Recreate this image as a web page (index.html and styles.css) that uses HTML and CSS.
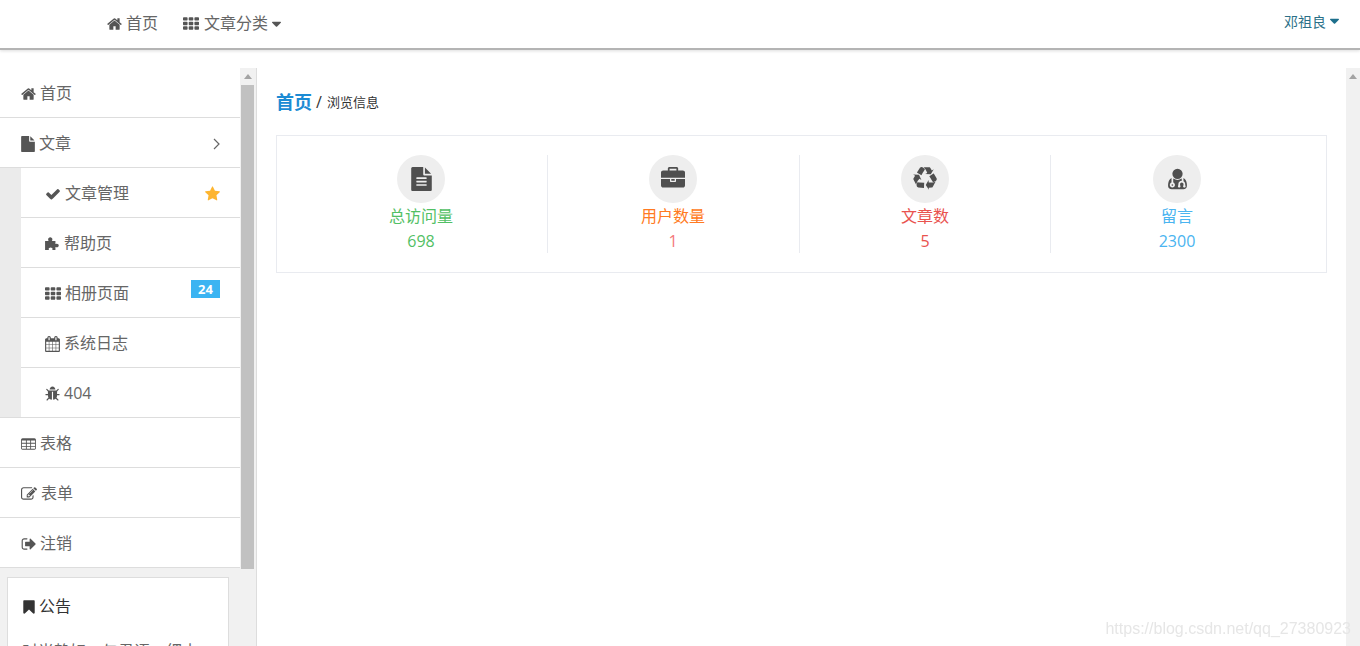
FILE: index.html
```html
<!DOCTYPE html>
<html lang="zh-CN">
<head>
<meta charset="utf-8">
<title>后台首页</title>
<link rel="stylesheet" href="styles.css">
</head>
<body>
<svg class="defs" xmlns="http://www.w3.org/2000/svg">
  <symbol id="i-home" viewBox="64 0 1664 1792"><path d="M1472 992v480q0 26-19 45t-45 19h-384v-384h-256v384h-384q-26 0-45-19t-19-45v-480q0-1 .5-3t.5-3l575-474 575 474q1 2 1 6zm223-69l-62 74q-8 9-21 11h-3q-13 0-21-7l-692-577-692 577q-12 8-24 7-13-2-21-11l-62-74q-8-10-7-23.5t11-21.5l719-599q32-26 76-26t76 26l244 204v-195q0-14 9-23t23-9h192q14 0 23 9t9 23v408l219 182q10 8 11 21.5t-7 23.5z"/></symbol>
  <symbol id="i-th" viewBox="0 0 1792 1792"><path d="M512 1248v192q0 40-28 68t-68 28h-320q-40 0-68-28t-28-68v-192q0-40 28-68t68-28h320q40 0 68 28t28 68zm0-512v192q0 40-28 68t-68 28h-320q-40 0-68-28t-28-68v-192q0-40 28-68t68-28h320q40 0 68 28t28 68zm640 512v192q0 40-28 68t-68 28h-320q-40 0-68-28t-28-68v-192q0-40 28-68t68-28h320q40 0 68 28t28 68zm-640-1024v192q0 40-28 68t-68 28h-320q-40 0-68-28t-28-68v-192q0-40 28-68t68-28h320q40 0 68 28t28 68zm640 512v192q0 40-28 68t-68 28h-320q-40 0-68-28t-28-68v-192q0-40 28-68t68-28h320q40 0 68 28t28 68zm640 512v192q0 40-28 68t-68 28h-320q-40 0-68-28t-28-68v-192q0-40 28-68t68-28h320q40 0 68 28t28 68zm-640-1024v192q0 40-28 68t-68 28h-320q-40 0-68-28t-28-68v-192q0-40 28-68t68-28h320q40 0 68 28t28 68zm640 512v192q0 40-28 68t-68 28h-320q-40 0-68-28t-28-68v-192q0-40 28-68t68-28h320q40 0 68 28t28 68zm0-512v192q0 40-28 68t-68 28h-320q-40 0-68-28t-28-68v-192q0-40 28-68t68-28h320q40 0 68 28t28 68z"/></symbol>
  <symbol id="i-caret" viewBox="0 0 1024 1792"><path d="M1024 704q0 26-19 45l-448 448q-19 19-45 19t-45-19l-448-448q-19-19-19-45t19-45 45-19h896q26 0 45 19t19 45z"/></symbol>
  <symbol id="i-file" viewBox="0 0 1536 1792"><path d="M1024 512v-472q22 14 36 28l408 408q14 14 28 36h-472zm-128 32q0 40 28 68t68 28h544v1056q0 40-28 68t-68 28h-1344q-40 0-68-28t-28-68v-1600q0-40 28-68t68-28h800v544z"/></symbol>
  <symbol id="i-check" viewBox="0 0 1792 1792"><path d="M1671 566q0 40-28 68l-724 724-136 136q-28 28-68 28t-68-28l-136-136-362-362q-28-28-28-68t28-68l136-136q28-28 68-28t68 28l294 295 656-657q28-28 68-28t68 28l136 136q28 28 28 68z"/></symbol>
  <symbol id="i-star" viewBox="0 0 1664 1792"><path d="M1664 647q0 22-26 48l-363 354 86 500q1 7 1 20 0 21-10.5 35.5t-30.5 14.5q-19 0-40-12l-449-236-449 236q-22 12-40 12-21 0-31.5-14.5t-10.5-35.5q0-6 2-20l86-500-364-354q-25-27-25-48 0-37 56-46l502-73 225-455q19-41 49-41t49 41l225 455 502 73q56 9 56 46z"/></symbol>
  <symbol id="i-puzzle" viewBox="0 0 1664 1792"><path d="M0 560h400q-60-80-60-190 0-100 70-160t170-60 170 60 70 160q0 110-60 190h400v340q70-40 150-40 100 0 160 60t60 140-60 140-160 60q-80 0-150-40v340H800q40-60 40-120 0-70-60-110t-160-40-160 40-60 110q0 60 40 120H0z"/></symbol>
  <symbol id="i-cal" viewBox="0 0 1664 1792"><path d="M128 1664h288v-288h-288v288zm352 0h320v-288h-320v288zm-352-352h288v-320h-288v320zm352 0h320v-320h-320v320zm-352-384h288v-288h-288v288zm736 736h320v-288h-320v288zm-384-736h320v-288h-320v288zm768 736h288v-288h-288v288zm-384-352h320v-320h-320v320zm-352-864v-288q0-13-9.5-22.5t-22.5-9.5h-64q-13 0-22.5 9.5t-9.5 22.5v288q0 13 9.5 22.5t22.5 9.5h64q13 0 22.5-9.5t9.5-22.5zm736 864h288v-320h-288v320zm-384-384h320v-288h-320v288zm384 0h288v-288h-288v288zm32-480v-288q0-13-9.5-22.5t-22.5-9.5h-64q-13 0-22.5 9.5t-9.5 22.5v288q0 13 9.5 22.5t22.5 9.5h64q13 0 22.5-9.5t9.5-22.5zm384-64v1280q0 52-38 90t-90 38h-1408q-52 0-90-38t-38-90v-1280q0-52 38-90t90-38h128v-96q0-66 47-113t113-47h64q66 0 113 47t47 113v96h384v-96q0-66 47-113t113-47h64q66 0 113 47t47 113v96h128q52 0 90 38t38 90z"/></symbol>
  <symbol id="i-bug" viewBox="0 0 1664 1792"><path d="M1632 960q0 26-19 45t-45 19h-224q0 171-67 290l208 209q19 19 19 45t-19 45q-18 19-45 19t-45-19l-198-197q-5 5-15 13t-42 28.5-65 36.5-82 29-97 13v-896h-128v896q-51 0-101.5-13.5t-87-33-66-39-43.5-32.5l-15-14-183 207q-20 21-48 21-24 0-43-16-19-18-20.5-44.5t15.5-46.5l202-227q-58-114-58-274h-224q-26 0-45-19t-19-45 19-45 45-19h224v-294l-173-173q-19-19-19-45t19-45 45-19 45 19l173 173h844l173-173q19-19 45-19t45 19 19 45-19 45l-173 173v294h224q26 0 45 19t19 45zm-480-576h-640q0-133 93.5-226.5t226.5-93.5 226.5 93.5 93.5 226.5z"/></symbol>
  <symbol id="i-table" viewBox="0 0 1664 1792"><path fill-rule="evenodd" d="M160 256h1344q66 0 113 47t47 113v960q0 66-47 113t-113 47H160q-66 0-113-47T0 1376V416q0-66 47-113t113-47zM96 512v256h448V512zm0 352v256h448V864zm0 352v160q0 64 64 64h384v-224zM640 512v256h384V512zm0 352v256h384V864zm0 352v224h384v-224zM1120 512v256h448V512zm0 352v256h448V864zm0 352v224h384q64 0 64-64v-160z"/></symbol>
  <symbol id="i-edit" viewBox="0 0 1792 1792"><path d="M888 1184l116-116-152-152-116 116v56h96v96h56zm440-720q-16-16-33 1l-350 350q-17 17-1 33t33-1l350-350q17-17 1-33zm80 594v190q0 119-84.5 203.5t-203.5 84.5h-832q-119 0-203.5-84.5t-84.5-203.5v-832q0-119 84.5-203.5t203.5-84.5h832q63 0 117 25 15 7 18 23 3 17-9 29l-49 49q-14 14-32 8-23-6-45-6h-832q-66 0-113 47t-47 113v832q0 66 47 113t113 47h832q66 0 113-47t47-113v-126q0-13 9-22l64-64q15-15 35-7t20 29zm-96-738l288 288-672 672h-288v-288zm444 132l-92 92-288-288 92-92q28-28 68-28t68 28l152 152q28 28 28 68t-28 68z"/></symbol>
  <symbol id="i-out" viewBox="0 0 1664 1792"><path d="M704 1440q0 4 1 20t.5 26.5-3 23.5-10 19.5-20.5 6.5h-320q-119 0-203.5-84.5t-84.5-203.5v-704q0-119 84.5-203.5t203.5-84.5h320q13 0 22.5 9.5t9.5 22.5q0 4 1 20t.5 26.5-3 23.5-10 19.5-20.5 6.5h-320q-66 0-113 47t-47 113v704q0 66 47 113t113 47h312l11.5 1 11.5 3 8 5.5 7 9 2 13.5zm928-544q0 26-19 45l-544 544q-19 19-45 19t-45-19-19-45v-288h-448q-26 0-45-19t-19-45v-384q0-26 19-45t45-19h448v-288q0-26 19-45t45-19 45 19l544 544q19 19 19 45z"/></symbol>
  <symbol id="i-bookmark" viewBox="0 0 1280 1792"><path d="M1164 128q23 0 44 9 33 13 52.5 41t19.5 62v1289q0 34-19.5 62t-52.5 41q-19 8-44 8-48 0-83-32l-441-424-441 424q-36 33-83 33-23 0-44-9-33-13-52.5-41t-19.5-62v-1289q0-34 19.5-62t52.5-41q21-9 44-9h1048z"/></symbol>
  <symbol id="i-filetext" viewBox="0 0 1536 1792"><path d="M1468 476q14 14 28 36h-472v-472q22 14 36 28zm-476 164h544v1056q0 40-28 68t-68 28h-1344q-40 0-68-28t-28-68v-1600q0-40 28-68t68-28h800v544q0 40 28 68t68 28zm160 736v-64q0-14-9-23t-23-9h-704q-14 0-23 9t-9 23v64q0 14 9 23t23 9h704q14 0 23-9t9-23zm0-256v-64q0-14-9-23t-23-9h-704q-14 0-23 9t-9 23v64q0 14 9 23t23 9h704q14 0 23-9t9-23zm0-256v-64q0-14-9-23t-23-9h-704q-14 0-23 9t-9 23v64q0 14 9 23t23 9h704q14 0 23-9t9-23z"/></symbol>
  <symbol id="i-brief" viewBox="0 0 1792 1792"><path d="M640 256h512v-128h-512v128zm1152 640v480q0 66-47 113t-113 47h-1472q-66 0-113-47t-47-113v-480h672v160q0 26 19 45t45 19h320q26 0 45-19t19-45v-160h672zm-768 0v128h-256v-128h256zm768-480v384h-1792v-384q0-66 47-113t113-47h352v-160q0-40 28-68t68-28h576q40 0 68 28t28 68v160h352q66 0 113 47t47 113z"/></symbol>
  <symbol id="i-recycle" viewBox="0 0 1792 1792"><path d="M836 1169l-15 368-2 22-420-29q-36-3-67-31.5t-47-65.5q-11-27-14.5-55t4-65 12-55 21.5-64 19-53q78 12 509 28zm-387-586l180 379-147-92q-63 72-111.5 144.5t-72.5 125-39.5 94.5-18.5 63l-4 21-190-357q-17-26-18-56t6-47l8-18q35-63 114-188l-140-86zm1231 517l-188 359q-12 29-36.5 46.5t-43.5 20.5l-18 4q-71 7-219 12l8 164-230-367 211-362 7 173q170 16 283 5t170-33zm-785-924q-47 63-265 435l-317-187-19-12 225-356q20-31 60-45t80-10q24 2 48.5 12t42 21 41.5 33 36 34.5 36 39.5 32 35zm655 307l212 363q18 37 12.5 76t-27.5 74q-13 20-33 37t-38 28-48.5 22-47 16-51.5 14-46 12q-34-72-265-436l313-195zm-143-226l142-83-220 373-419-20 151-86q-34-89-75-166t-75.5-123.5-64.5-80-47-46.5l-17-13 405 1q31-3 58 10.5t39 28.5l11 15q39 61 112 190z"/></symbol>
  <symbol id="i-usermd" viewBox="0 0 1408 1792"><path d="M384 1344q0 26-19 45t-45 19-45-19-19-45 19-45 45-19 45 19 19 45zm1024 61q0 121-73 190t-194 69h-874q-121 0-194-69t-73-190q0-68 5.5-131t24-138 47.5-132.5 81-103 120-60.5q-22 52-22 120v203q-58 20-93 70t-35 111q0 80 56 136t136 56 136-56 56-136q0-61-35.5-111t-92.5-70v-203q0-62 25-93 132 104 295 104t295-104q25 31 25 93v64q-106 0-181 75t-75 181v89q-32 29-32 71 0 40 28 68t68 28 68-28 28-68q0-42-32-71v-89q0-52 38-90t90-38 90 38 38 90v89q-32 29-32 71 0 40 28 68t68 28 68-28 28-68q0-42-32-71v-89q0-68-34.5-127.5t-93.5-93.5q0-10 .5-42.5t0-48-2.5-41.5-7-47-13-40q68 15 120 60.5t81 103 47.5 132.5 24 138 5.5 131zm-320-893q0 159-112.5 271.5t-271.5 112.5-271.5-112.5-112.5-271.5 112.5-271.5 271.5-112.5 271.5 112.5 112.5 271.5z"/></symbol>
</svg>

<header class="navbar">
  <nav class="nav-left">
    <a class="nav-link"><svg class="ic w-home"><use href="#i-home"/></svg>首页</a>
    <a class="nav-link"><svg class="ic w-th"><use href="#i-th"/></svg>文章分类<svg class="ic w-caret caret-gap"><use href="#i-caret"/></svg></a>
  </nav>
  <a class="nav-user">邓祖良<svg class="ic w-caret user-caret"><use href="#i-caret"/></svg></a>
</header>

<div class="layout">
  <aside class="sidebar">
    <div class="side-body">
      <ul class="menu">
        <li class="menu-item"><svg class="ic w-home"><use href="#i-home"/></svg>首页</li>
        <li class="menu-item"><svg class="ic w-file"><use href="#i-file"/></svg>文章
          <svg class="chevron" viewBox="0 0 7 12"><path d="M1 1l5 5-5 5"/></svg></li>
        <li class="submenu">
          <ul class="sub-list">
            <li class="sub-item"><svg class="ic w-th"><use href="#i-check"/></svg>文章管理<svg class="star"><use href="#i-star"/></svg></li>
            <li class="sub-item"><svg class="ic w-home"><use href="#i-puzzle"/></svg>帮助页</li>
            <li class="sub-item"><svg class="ic w-th"><use href="#i-th"/></svg>相册页面<span class="badge">24</span></li>
            <li class="sub-item"><svg class="ic w-home"><use href="#i-cal"/></svg>系统日志</li>
            <li class="sub-item"><svg class="ic w-home"><use href="#i-bug"/></svg>404</li>
          </ul>
        </li>
        <li class="menu-item"><svg class="ic w-home"><use href="#i-table"/></svg>表格</li>
        <li class="menu-item"><svg class="ic w-th"><use href="#i-edit"/></svg>表单</li>
        <li class="menu-item"><svg class="ic w-home"><use href="#i-out"/></svg>注销</li>
      </ul>
      <section class="notice">
        <h3 class="notice-title"><svg class="ic w-book"><use href="#i-bookmark"/></svg>公告</h3>
        <p class="notice-text">时光静好，与君语，细水流年，与君同。</p>
      </section>
    </div>
    <div class="scrollbar side-scroll"><span class="arrow"></span><span class="thumb"></span></div>
  </aside>

  <main class="main">
    <div class="content">
      <div class="crumb"><span class="crumb-home">首页</span><span class="crumb-sep">/</span><span class="crumb-sub">浏览信息</span></div>
      <div class="stats">
        <div class="stat stat-green">
          <span class="stat-icon"><svg class="big w-file-big"><use href="#i-filetext"/></svg></span>
          <span class="stat-label">总访问量</span><span class="stat-value">698</span>
        </div>
        <div class="stat stat-orange">
          <span class="stat-icon"><svg class="big w-big"><use href="#i-brief"/></svg></span>
          <span class="stat-label">用户数量</span><span class="stat-value">1</span>
        </div>
        <div class="stat stat-red">
          <span class="stat-icon"><svg class="big w-big"><use href="#i-recycle"/></svg></span>
          <span class="stat-label">文章数</span><span class="stat-value">5</span>
        </div>
        <div class="stat stat-blue">
          <span class="stat-icon"><svg class="big w-user-big"><use href="#i-usermd"/></svg></span>
          <span class="stat-label">留言</span><span class="stat-value">2300</span>
        </div>
      </div>
    </div>
    <div class="scrollbar main-scroll"><span class="arrow"></span></div>
  </main>
</div>
<div class="watermark">https://blog.csdn.net/qq_27380923</div>
</body>
</html>
```

FILE: styles.css
```css
* { box-sizing: border-box; }
html, body { height: 100%; }
body {
  margin: 0;
  overflow: hidden;
  background: #fff;
  color: #666;
  font: 16px/25px "Open Sans", "Noto Sans CJK SC", sans-serif;
  display: flex;
  flex-direction: column;
}
ul { list-style: none; margin: 0; padding: 0; }
.defs { display: none; }

.ic { height: 16px; fill: #555; flex: none; margin-right: 4px; }
.w-home { width: 15px; }
.w-th { width: 16px; }
.w-file { width: 14px; }
.w-book { width: 12px; }
.w-caret { width: 9px; margin-right: 0; }
.caret-gap { margin-left: 4px; }

.navbar {
  height: 50px;
  flex: none;
  display: flex;
  justify-content: space-between;
  align-items: center;
  padding: 0 21px 1px 107px;
  background: #fff;
  border-bottom: 2px solid #b4b4b4;
  box-shadow: 0 1px 3px #ddd;
}
.nav-left { display: flex; gap: 25px; }
.nav-link { display: flex; align-items: center; color: #666; }
.nav-link .w-th { margin-right: 5px; }
.nav-user { display: flex; align-items: center; font-size: 14px; color: #2a7088; margin-top: -5px; }
.user-caret { margin-left: 4px; fill: #1d6f8c; }

.layout { flex: 1; display: flex; min-height: 0; margin-top: 18px; }

.sidebar {
  width: 257px;
  flex: none;
  display: flex;
  border-right: 1px solid #ddd;
  overflow: hidden;
}
.side-body { width: 240px; flex: none; background: #f1f1f1; }
.menu { background: #fff; }
.menu-item {
  height: 50px;
  display: flex;
  align-items: center;
  padding: 2px 0 0 21px;
  border-bottom: 1px solid #ddd;
  position: relative;
}
.chevron {
  width: 7px;
  height: 12px;
  margin-left: auto;
  margin-right: 20px;
  fill: none;
  stroke: #666;
  stroke-width: 1.2;
}
.submenu { background: #ebebeb; border-bottom: 1px solid #ddd; padding-left: 21px; }
.sub-item {
  height: 50px;
  display: flex;
  align-items: center;
  padding: 2px 0 0 24px;
  background: #fff;
  border-bottom: 1px solid #ddd;
  position: relative;
}
.sub-item:last-child { height: 49px; border-bottom: 0; }
.star {
  width: 15px;
  height: 16px;
  margin-left: auto;
  margin-right: 20px;
  fill: #fdb530;
}
.badge {
  position: absolute;
  top: 12px;
  right: 20px;
  width: 29px;
  height: 18px;
  background: #3bb4f2;
  color: #fff;
  font-size: 13px;
  font-weight: 700;
  line-height: 18px;
  text-align: center;
}

.notice {
  margin: 9px 11px 0 7px;
  padding: 16px 14px 0;
  height: 120px;
  background: #fff;
  border: 1px solid #ddd;
}
.notice-title {
  margin: 0 0 0 1px;
  display: flex;
  align-items: center;
  font-size: 16px;
  font-weight: 400;
  color: #333;
}
.notice-title .ic { margin-right: 4px; fill: #333; }
.notice-text { margin: 20px 0 0; width: 180px; }

.scrollbar { flex: none; background: #f1f1f1; position: relative; }
.side-scroll { width: 16px; }
.main-scroll { width: 14px; }
.arrow {
  position: absolute;
  top: 6px;
  left: 4px;
  width: 0;
  height: 0;
  border: 4px solid transparent;
  border-top: 0;
  border-bottom: 5px solid #a3a3a3;
}
.main-scroll .arrow { left: 3px; }
.thumb {
  position: absolute;
  top: 17px;
  left: 1px;
  width: 13px;
  height: 484px;
  background: #c1c1c1;
}

.main { flex: 1; display: flex; min-width: 0; }
.content { flex: 1; padding: 19px 19px 0; min-width: 0; }
.crumb { display: flex; align-items: center; height: 30px; line-height: 30px; margin-bottom: 18px; }
.crumb-home { font-size: 18px; font-weight: 700; color: #1b8bd4; }
.crumb-sep { margin: 0 5px 0 4px; font-size: 16px; color: #333; }
.crumb-sub { font-size: 13px; color: #333; }

.stats {
  height: 138px;
  display: grid;
  grid-template-columns: 252px 252px 251px 252px;
  grid-template-rows: 98px;
  padding: 19px 23px 19px 19px;
  border: 1px solid #e9ebf0;
}
.stat {
  display: flex;
  flex-direction: column;
  align-items: center;
  border-right: 1px solid #e9ebf0;
}
.stat-green, .stat-orange { padding-right: 1px; }
.stat:last-child { border-right: 0; }
.stat-icon {
  width: 48px;
  height: 48px;
  margin-bottom: 1px;
  flex: none;
  border-radius: 50%;
  background: #eee;
  display: flex;
  align-items: center;
  justify-content: center;
  fill: #4f4f4f;
}
.big { height: 24px; display: block; }
.w-file-big { width: 21px; }
.w-big { width: 24px; }
.w-user-big { width: 19px; }
.stat-label, .stat-value { display: block; line-height: 25px; flex: none; }
.stat-green { color: #52c064; }
.stat-orange { color: #ff7a22; }
.stat-red { color: #e9534f; }
.stat-blue { color: #4ab4f0; }
.stat-orange .stat-value { color: #f4797a; }

.watermark {
  position: absolute;
  right: 9px;
  top: 616px;
  font: 16px/26px "Liberation Sans", sans-serif;
  color: #e6e6e6;
  filter: blur(.5px);
}
```
